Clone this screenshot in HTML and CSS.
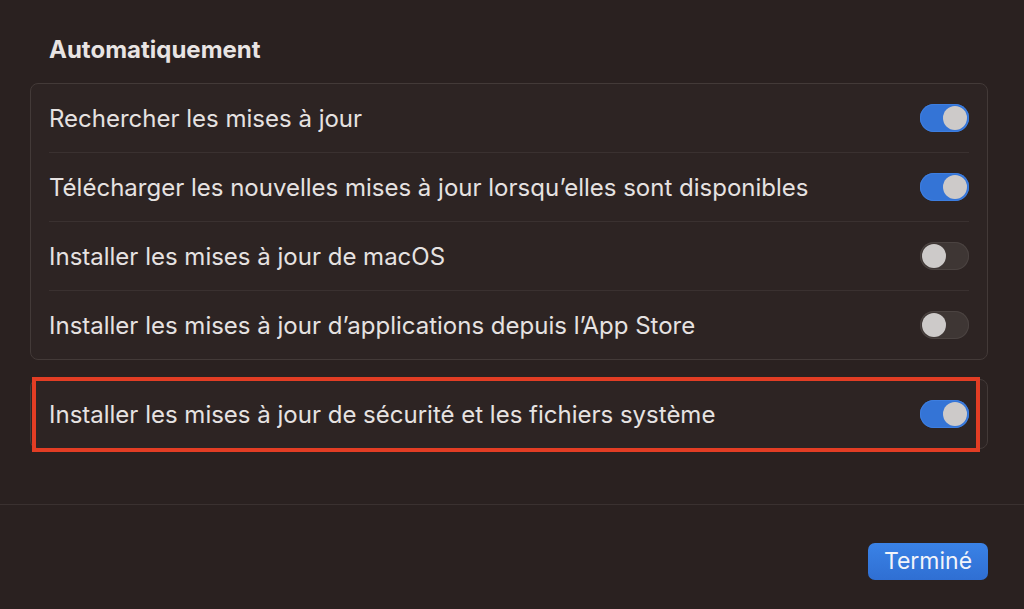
FILE: index.html
```html
<!doctype html>
<html lang="fr">
<head>
	<meta charset="UTF-8">
	<title>Mises à jour automatiques</title>
<link rel="stylesheet" href="styles.css">
</head>
<body>
	<div class="sheet">
		<div class="content">
			<h2 class="title">Automatiquement</h2>
			<div class="group">
				<div class="row">
					<span class="label">Rechercher les mises à jour</span>
					<span class="switch on"><i></i></span>
				</div>
				<div class="row">
					<span class="label">Télécharger les nouvelles mises à jour lorsqu’elles sont disponibles</span>
					<span class="switch on"><i></i></span>
				</div>
				<div class="row">
					<span class="label">Installer les mises à jour de macOS</span>
					<span class="switch"><i></i></span>
				</div>
				<div class="row">
					<span class="label">Installer les mises à jour d’applications depuis l’App Store</span>
					<span class="switch"><i></i></span>
				</div>
			</div>
			<div class="group single">
				<div class="row">
					<span class="label">Installer les mises à jour de sécurité et les fichiers système</span>
					<span class="switch on"><i></i></span>
				</div>
				<div class="highlight"></div>
			</div>
		</div>
		<div class="footer">
			<a href="javascript:;" class="btn">Terminé</a>
		</div>
	</div>
</body>
</html>
```

FILE: styles.css
```css
body{
	margin: 0;
	background-color: #2a2120;
	font-family: Inter, "Noto Sans", sans-serif;
	color: #e6e2e1;
}
.sheet{
	height: 609px;
	display: flex;
	flex-direction: column;
}
.content{
	padding: 35px 36px 0 30px;
	height: 469px;
	border-bottom: 1px solid #3a3130;
}
.title{
	margin: 0 0 0 19px;
	font-size: 24px;
	line-height: 29px;
	font-weight: 700;
	color: #e8e4e3;
}
.group{
	margin-top: 19px;
	border: 1px solid #433a38;
	border-radius: 8px;
	background-color: #2d2423;
}
.group.single{
	margin-top: 19px;
	position: relative;
}
.row{
	margin: 0 18px;
	height: 68px;
	display: flex;
	align-items: center;
	justify-content: space-between;
	border-bottom: 1px solid #3a3130;
}
.row:last-child,
.single .row{
	border-bottom: none;
}
.label{
	font-size: 24px;
}
.switch{
	width: 49px;
	height: 28px;
	border-radius: 14px;
	background-color: #3e3634;
	box-shadow: inset 0 0 0 1px #4b4341;
	display: flex;
	align-items: center;
	padding: 0 2px;
	box-sizing: border-box;
}
.switch i{
	width: 24px;
	height: 24px;
	border-radius: 50%;
	background-color: #cdcac9;
}
.switch.on{
	background-color: #3474d6;
	box-shadow: inset 0 0 0 1px #3d7ee0;
	justify-content: flex-end;
}
.highlight{
	position: absolute;
	left: 1px;
	top: -3px;
	right: 7px;
	bottom: -4px;
	border: 4px solid #e23d24;
}
.footer{
	flex: 1;
	display: flex;
	justify-content: flex-end;
	align-items: flex-start;
	padding: 38px 36px 0 0;
}
.btn{
	display: block;
	width: 120px;
	height: 37px;
	line-height: 36px;
	text-align: center;
	border-radius: 7px;
	background: linear-gradient(#3a82e6, #2f6fd3);
	color: #f2f4fa;
	font-size: 23px;
	text-decoration: none;
}
```
